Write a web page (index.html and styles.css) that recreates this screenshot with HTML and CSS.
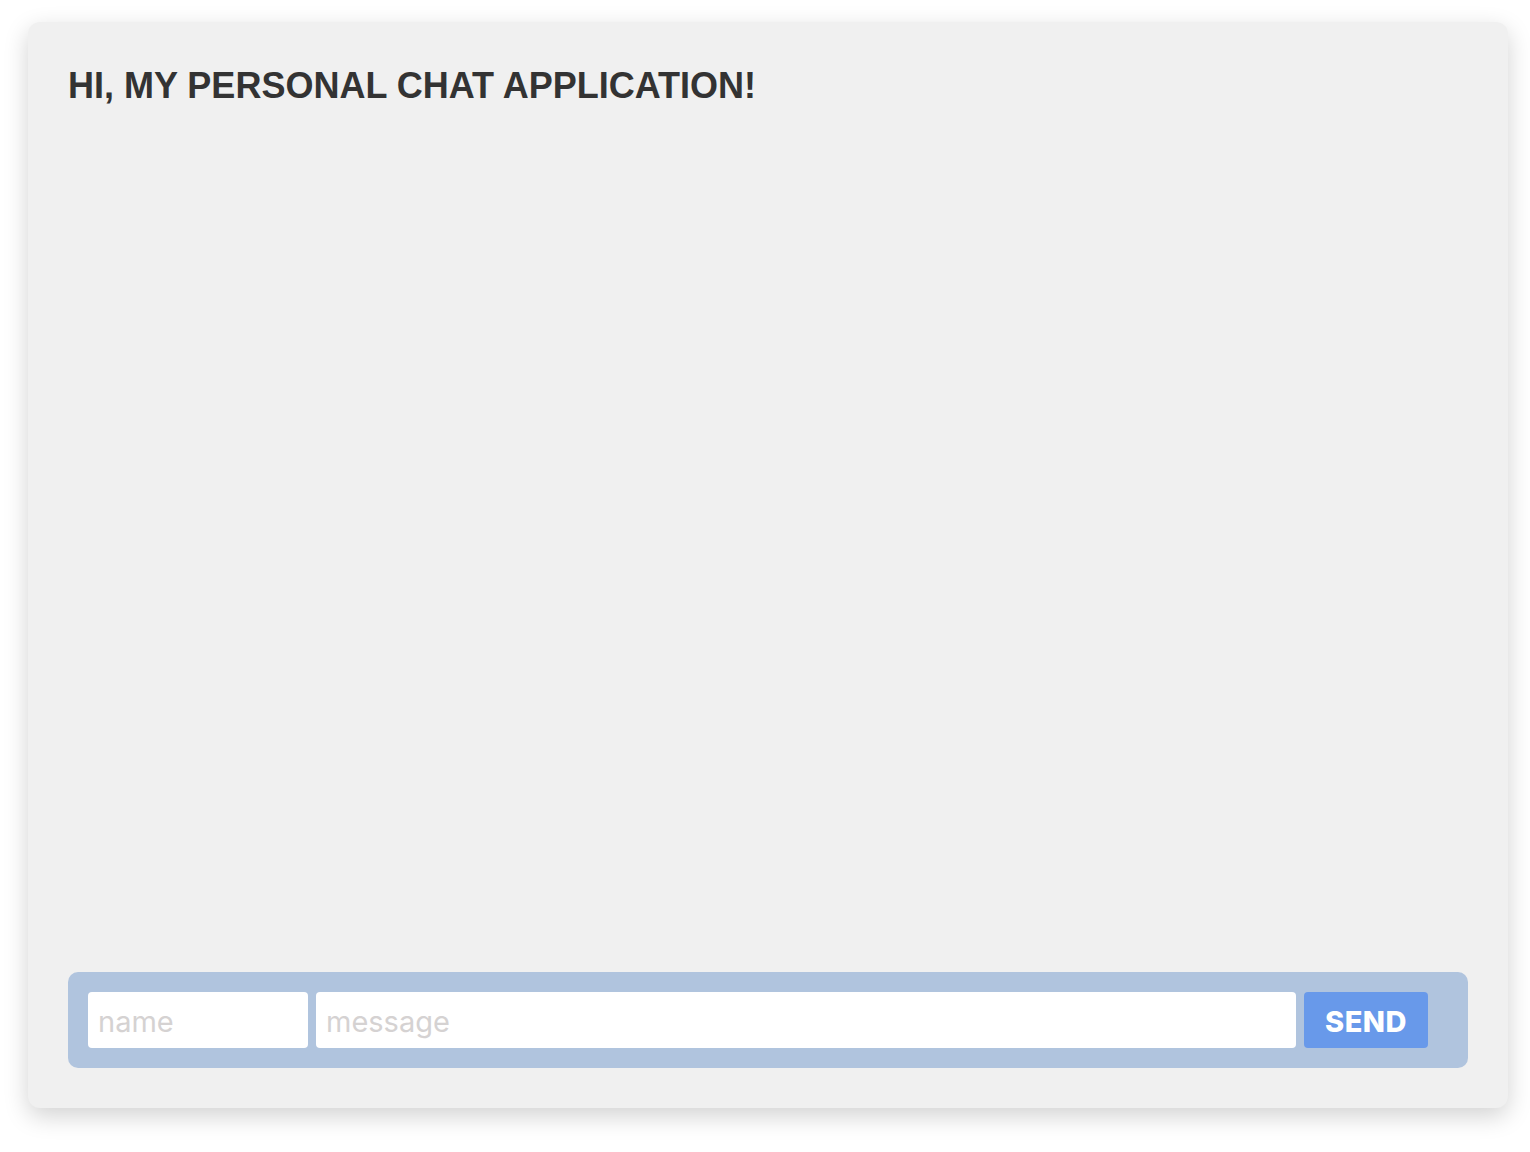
FILE: index.html
```html
<!DOCTYPE html>
<html lang="en">
<head>
<meta charset="utf-8">
<title>Chat</title>
<link rel="stylesheet" href="styles.css">
</head>
<body>
<div class="page">
  <main class="card">
    <h1 class="title">HI, MY PERSONAL CHAT APPLICATION!</h1>
    <div class="messages"></div>
    <form class="composer">
      <input class="field field-name" type="text" placeholder="name">
      <input class="field field-message" type="text" placeholder="message">
      <button class="send" type="button">SEND</button>
    </form>
  </main>
</div>
</body>
</html>
```

FILE: styles.css
```css
html, body {
  margin: 0;
  padding: 0;
  background: #ffffff;
}

.page {
  padding: 22px 22px 44px 28px;
}

.card {
  box-sizing: border-box;
  width: 1480px;
  height: 1086px;
  background: #f0f0f0;
  border-radius: 12px;
  box-shadow: 0 8px 24px rgba(0, 0, 0, 0.18);
  padding: 40px;
  display: flex;
  flex-direction: column;
}

.title {
  margin: 3px 0 0 0;
  font-family: "Liberation Sans", Arial, sans-serif;
  font-weight: 700;
  font-size: 36px;
  line-height: 1.15;
  color: #333333;
  letter-spacing: 0;
}

.messages {
  flex: 1;
}

.composer {
  display: flex;
  align-items: center;
  gap: 8px;
  background: #b0c4de;
  border-radius: 10px;
  padding: 20px 40px 20px 20px;
  margin: 0;
}

.field {
  box-sizing: border-box;
  height: 56px;
  border: none;
  border-radius: 4px;
  background: #ffffff;
  padding: 2px 10px 0 10px;
  font-family: Inter, "Noto Sans", sans-serif;
  font-size: 29px;
  color: #333333;
  outline: none;
  margin: 0;
}

.field::placeholder {
  color: #d5d2d2;
}

.field-name {
  width: 220px;
}

.field-message {
  flex: 1;
  min-width: 0;
}

.send {
  box-sizing: border-box;
  width: 124px;
  height: 56px;
  border: none;
  border-radius: 4px;
  background: #6899ea;
  color: #ffffff;
  font-family: Inter, "Noto Sans", sans-serif;
  font-weight: 800;
  font-size: 29px;
  letter-spacing: 0.5px;
  padding: 2px 0 0 0;
  margin: 0;
}
```
